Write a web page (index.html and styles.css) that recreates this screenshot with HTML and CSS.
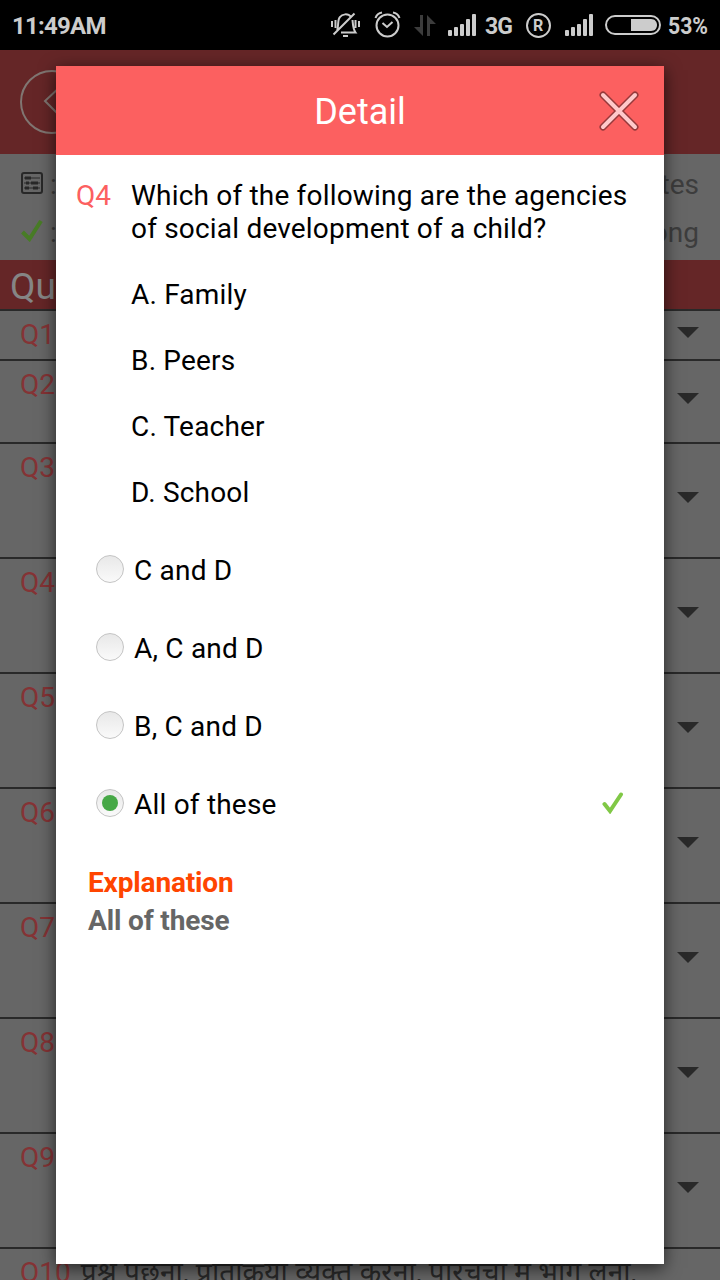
FILE: index.html
```html
<!DOCTYPE html>
<html lang="en">
<head>
    <meta charset="UTF-8">
    <meta name="viewport" content="width=device-width, initial-scale=1.0">
    <title>Detail</title>
    <link rel="stylesheet" href="styles.css">
</head>
<body>
    <div class="screen">
        <div class="status-bar">
            <span class="time">11:49AM</span>
            <svg class="status-icons" width="390" height="50" viewBox="330 0 390 50" fill="none" stroke="#ccc" stroke-width="2">
                <!-- muted bell -->
                <path d="M337 30C339 27 337 20 340 17C342 14 348 13 351 17M352.5 20C353 25 353 29 355.5 32.500H341M333.500 34.500L354.500 13.500M343 36H348M332 21V27M335.500 20V28M355.500 20V28M359 21V27"/>
                <!-- alarm -->
                <circle cx="387.500" cy="25.500" r="11"/>
                <path d="M382.500 23L387 27L392.500 22M375.500 18C376.500 15 379 13 382 12.500M399.500 18C398.500 15 396 13 393 12.500"/>
                <!-- data arrows -->
                <g fill="#3c3c3c" stroke="none">
                    <path d="M420 15H423V36L414 27H420Z"/>
                    <path d="M427 36V15L436 24H430V36Z"/>
                </g>
                <g fill="#ccc" stroke="none">
                    <rect x="448" y="30" width="4" height="6" rx="1"/>
                    <rect x="454" y="27" width="4" height="9" rx="1"/>
                    <rect x="460" y="24" width="4" height="12" rx="1"/>
                    <rect x="466" y="19" width="4" height="17" rx="1"/>
                    <rect x="472" y="14" width="4" height="22" rx="1"/>
                    <rect x="565" y="30" width="4" height="6" rx="1"/>
                    <rect x="571" y="27" width="4" height="9" rx="1"/>
                    <rect x="577" y="24" width="4" height="12" rx="1"/>
                    <rect x="583" y="19" width="4" height="17" rx="1"/>
                    <rect x="589" y="14" width="4" height="22" rx="1"/>
                    <path d="M631 19H651C659 19 659 31 651 31H631Z"/>
                    <text x="485" y="34" class="status-text" textLength="28">3G</text>
                    <text x="533" y="31" class="status-reg">R</text>
                    <text x="668" y="34" class="status-text" textLength="40" lengthAdjust="spacingAndGlyphs">53%</text>
                </g>
                <circle cx="538.500" cy="25.500" r="11.500"/>
                <rect x="606" y="16" width="54" height="18" rx="9"/>
            </svg>
        </div>

        <div class="app-header">
            <svg width="64" height="64" viewBox="0 0 64 64" fill="none" stroke="#807672" stroke-width="2">
                <circle cx="32" cy="32" r="31"/>
                <path d="M41 16L25 31L41 47"/>
            </svg>
        </div>

        <div class="summary">
            <div class="summary-row">
                <svg width="22" height="22" viewBox="0 0 22 22" fill="none" stroke="#282828" stroke-width="2">
                    <rect x="1" y="1" width="20" height="20" rx="2"/>
                    <path d="M3 6H19M3 11H19M3 16H19" stroke-width="1"/>
                    <path d="M4 6H10M5 11H8M10 11H17M4 16H8M12 16H17" stroke-width="3"/>
                </svg>
                <span class="colon">:</span>
                <span class="value">Minutes</span>
            </div>
            <div class="summary-row">
                <svg width="22" height="22" viewBox="0 0 22 22" fill="none" stroke="#487c26" stroke-width="4">
                    <path d="M1.500 12L8.500 19L20 1"/>
                </svg>
                <span class="colon">:</span>
                <span class="value">Wrong</span>
            </div>
        </div>

        <div class="list-title">Question</div>

        <div class="question-list">
            <div class="question short"><span>Q1</span><i class="arrow"></i></div>
            <div class="question medium"><span>Q2</span><i class="arrow"></i></div>
            <div class="question"><span>Q3</span><i class="arrow"></i></div>
            <div class="question"><span>Q4</span><i class="arrow"></i></div>
            <div class="question"><span>Q5</span><i class="arrow"></i></div>
            <div class="question"><span>Q6</span><i class="arrow"></i></div>
            <div class="question"><span>Q7</span><i class="arrow"></i></div>
            <div class="question"><span>Q8</span><i class="arrow"></i></div>
            <div class="question"><span>Q9</span><i class="arrow"></i></div>
            <div class="question"><span>Q10</span><p class="hindi" lang="hi">प्रश्न पूछना, प्रतिक्रिया व्यक्त करना, परिचर्चा में भाग लेना,</p></div>
        </div>

        <div class="dialog">
            <div class="dialog-header">
                <h1>Detail</h1>
                <svg class="close" width="40" height="40" viewBox="0 0 40 40" fill="none" stroke-linecap="round">
                    <path d="M4 4L36 36M36 4L4 36" stroke="#96393b" stroke-width="7"/>
                    <path d="M4 4L36 36M36 4L4 36" stroke="#ffc9cb" stroke-width="4"/>
                </svg>
            </div>
            <div class="dialog-body">
                <div class="ask">
                    <span class="number">Q4</span>
                    <div class="ask-text">
                        <p>Which of the following are the agencies<br>of social development of a child?</p>
                        <p>A. Family</p>
                        <p>B. Peers</p>
                        <p>C. Teacher</p>
                        <p>D. School</p>
                    </div>
                </div>
                <div class="options">
                    <div class="option"><i class="radio"></i>C and D</div>
                    <div class="option"><i class="radio"></i>A, C and D</div>
                    <div class="option"><i class="radio"></i>B, C and D</div>
                    <div class="option">
                        <i class="radio checked"></i>All of these
                        <svg class="tick" width="22" height="22" viewBox="0 0 22 22" fill="none" stroke="#80c846" stroke-width="4" stroke-linecap="round">
                            <path d="M2.500 12L8 19L19 2.500"/>
                        </svg>
                    </div>
                </div>
                <div class="explanation">
                    <h2>Explanation</h2>
                    <p>All of these</p>
                </div>
            </div>
        </div>
    </div>
</body>
</html>
```
FILE: styles.css
```css
* {
    box-sizing: border-box;
    margin: 0;
    padding: 0;
}
body {
    font-family: Roboto, "Noto Sans", sans-serif;
    font-size: 28px;
    line-height: 33px;
    background: #666;
}
.screen {
    position: relative;
    width: 720px;
    height: 1280px;
    overflow: hidden;
    background: #666;
}
.status-bar {
    display: flex;
    justify-content: space-between;
    height: 50px;
    padding-left: 12px;
    background: #000;
}
.time {
    color: #ccc;
    font-size: 24px;
    font-weight: 700;
    line-height: 52px;
    letter-spacing: -0.75px;
}
.status-text {
    font-size: 23px;
    font-weight: 700;
}
.status-reg {
    font-size: 16px;
    font-weight: 700;
}
.app-header {
    height: 104px;
    padding: 20px;
    background: #652627;
}
.app-header svg { display: block; }
.summary {
    height: 106px;
    padding: 6px 21px;
    color: #3d3d3d;
}
.summary-row {
    display: flex;
    align-items: center;
    height: 48px;
}
.summary-row svg { margin-bottom: 2px; }
.colon { margin-left: 7px; }
.value { margin-left: auto; }
.list-title {
    height: 51px;
    padding: 4px 10px;
    background: #652627;
    border-bottom: 2px solid #292929;
    color: #858585;
    font-size: 37px;
    line-height: 46px;
}
.question {
    display: flex;
    justify-content: space-between;
    align-items: center;
    height: 115px;
    padding: 0 21px 0 20px;
    border-bottom: 2px solid #292929;
    color: #853335;
}
.question.short { height: 50px; }
.question.medium { height: 83px; }
.question span {
    align-self: flex-start;
    margin-top: 7px;
}
.arrow {
    margin-bottom: 6px;
    border: 11px solid transparent;
    border-top-color: #292929;
    border-bottom: 0;
}
.hindi {
    align-self: flex-start;
    flex: 1;
    margin: 7px 0 0 10px;
    color: #292929;
    letter-spacing: 0.2px;
    white-space: nowrap;
}

/* dialog over the list */
.dialog {
    position: absolute;
    top: 66px;
    left: 56px;
    width: 608px;
    height: 1198px;
    background: #fff;
    box-shadow: 0 4px 16px rgba(0, 0, 0, 0.65);
}
.dialog-header {
    display: flex;
    align-items: center;
    height: 89px;
    padding: 0 25px 0 65px;
    background: #fc6060;
}
.dialog-header h1 {
    flex: 1;
    padding-top: 3px;
    color: #fff;
    font-size: 36px;
    font-weight: 400;
    line-height: 42px;
    text-align: center;
}
.dialog-body { padding: 24px 20px; }
.ask {
    display: flex;
    color: #000;
}
.number {
    width: 55px;
    color: #fc6060;
}
.ask-text {
    display: grid;
    gap: 33px;
    letter-spacing: 0.19px;
}
.options {
    margin-top: 22px;
    letter-spacing: 0.2px;
}
.option {
    display: flex;
    align-items: center;
    height: 78px;
    padding: 0 20px;
}
.radio {
    position: relative;
    width: 28px;
    height: 28px;
    margin: 0 10px 2px 0;
    border: 1px solid #c4c4c4;
    border-radius: 50%;
    background: linear-gradient(#e8e8e8, #fafafa);
}
.radio.checked::after {
    content: "";
    position: absolute;
    top: 5px;
    left: 5px;
    width: 16px;
    height: 16px;
    border-radius: 50%;
    background: #46a846;
}
.tick {
    margin-left: auto;
    margin-bottom: 2px;
}
.explanation {
    padding: 23px 12px;
    font-weight: 700;
    letter-spacing: -0.15px;
}
.explanation h2 {
    color: #ff4500;
    font-size: 28px;
}
.explanation p {
    margin-top: 5px;
    color: #666;
}
```
